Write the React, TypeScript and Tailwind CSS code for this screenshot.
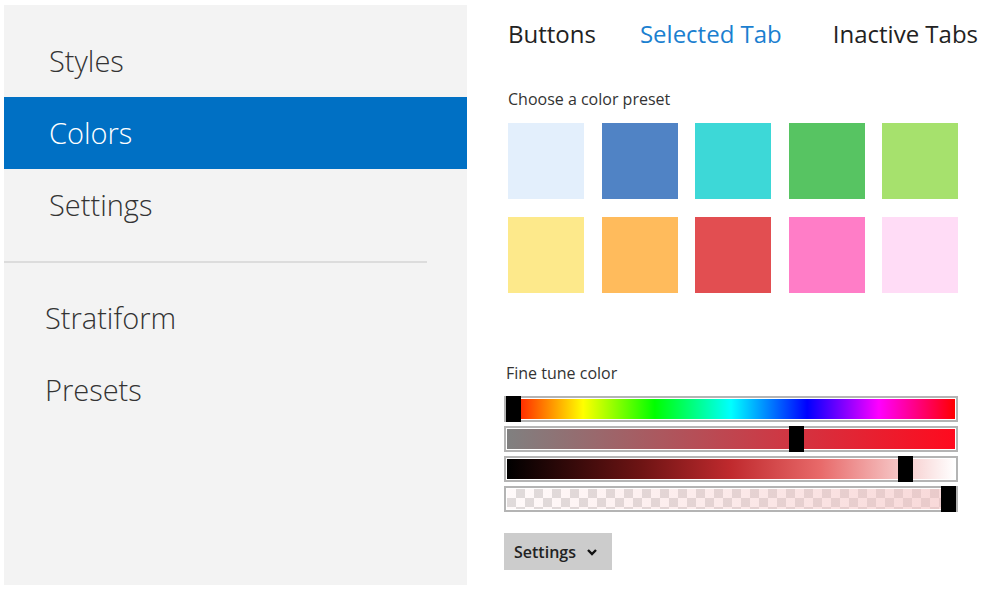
import React from 'react';

const presets = [
  '#e3effc', '#5083c5', '#3dd8d7', '#57c462', '#a6e16d',
  '#fde98b', '#ffbb5c', '#e24e51', '#ff7dc7', '#ffdcf6',
];

const navTop = ['Styles', 'Colors', 'Settings'];
const navBottom = ['Stratiform', 'Presets'];

const Slider: React.FC<{ background: string; handle: number }> = ({ background, handle }) => (
  <div className="relative h-[26px] border-2 border-[#b4b4b4] bg-white p-[1px]">
    <div className="h-full w-full" style={{ background }} />
    <div
      className="absolute top-[-2px] h-[26px] w-[15px] bg-black"
      style={{ left: `calc(${handle}% - ${handle * 0.15}px)` }}
    />
  </div>
);

const checker =
  'linear-gradient(to right, rgba(255,240,240,0.35), rgba(245,200,200,0.7)), repeating-conic-gradient(#cfcfcf 0% 25%, #ffffff 0% 50%) 0 0 / 18px 18px';

const App: React.FC = () => {
  return (
    <div className="flex h-[590px] w-[1000px] bg-white font-['Open_Sans',sans-serif] text-[#222]">
      {/* Sidebar */}
      <div className="mt-[5px] mb-[5px] ml-[4px] flex w-[463px] flex-col bg-[#f3f3f3] pt-[20px]">
        {navTop.map(item => (
          <div
            key={item}
            className={`flex h-[72px] items-center pl-[45px] text-[29px] font-light ${
              item === 'Colors' ? 'bg-[#0070c4] text-white' : 'text-[#333]'
            }`}
          >
            {item}
          </div>
        ))}
        <div className="mt-[20px] mr-[40px] border-t-2 border-[#dcdcdc]" />
        <div className="flex flex-col pt-[19px]">
          {navBottom.map(item => (
            <div key={item} className="flex h-[72px] items-center pl-[41px] text-[29px] font-light text-[#333]">
              {item}
            </div>
          ))}
        </div>
      </div>

      {/* Main panel */}
      <div className="flex flex-1 flex-col pl-[37px] pt-[14px]">
        <div className="ml-[4px] flex text-[24px] leading-[40px]">
          <span className="text-[#222]">Buttons</span>
          <span className="ml-[44px] text-[#1b7fd0]">Selected Tab</span>
          <span className="ml-[51px] text-[#222]">Inactive Tabs</span>
        </div>

        <div className="mt-[33px] ml-[4px] text-[16px] text-[#333]">Choose a color preset</div>
        <div className="mt-[12px] ml-[4px] grid w-[450px] grid-cols-5 gap-x-[18px] gap-y-[18px]">
          {presets.map(c => (
            <div key={c} className="h-[76px] w-[76px]" style={{ background: c }} />
          ))}
        </div>

        <div className="mt-[68px] ml-[2px] text-[16px] text-[#333]">Fine tune color</div>
        <div className="mt-[11px] flex w-[454px] flex-col gap-[4px]">
          <Slider
            background="linear-gradient(to right, #ff0000, #ffff00 17%, #00ff00 33%, #00ffff 50%, #0000ff 67%, #ff00ff 83%, #ff0000)"
            handle={0}
          />
          <Slider background="linear-gradient(to right, #808080, #ff0a1e)" handle={65} />
          <Slider
            background="linear-gradient(to right, #000000, #6e1414 30%, #c02a2e 50%, #e86a6a 70%, #f6c8c8 88%, #ffffff)"
            handle={90}
          />
          <Slider background={checker} handle={100} />
        </div>

        <button className="mt-[21px] flex h-[37px] w-[108px] items-center gap-[10px] bg-[#cccccc] pl-[10px] text-[16px] font-semibold text-[#222]">
          Settings
          <svg width="12" height="12" viewBox="0 0 12 12" fill="none" stroke="#111" strokeWidth="2.4">
            <path d="M2 4l4 4 4-4" />
          </svg>
        </button>
      </div>
    </div>
  );
};

export default App;
